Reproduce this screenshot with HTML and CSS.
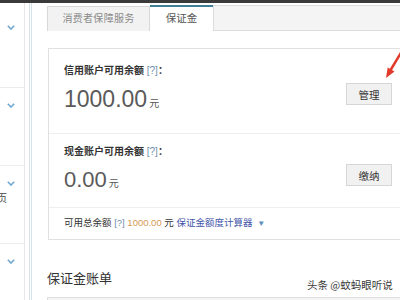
FILE: index.html
```html
<!DOCTYPE html>
<html lang="zh">
<head>
<meta charset="utf-8">
<link rel="stylesheet" href="styles.css">
</head>
<body>
<div class="topbar"></div>
<div class="layout">
  <aside class="sidebar">
    <div class="side-item first">
      <svg class="chev" viewBox="0 0 8 5" width="8" height="5"><polyline points="0.8,0.8 4,4 7.2,0.8"/></svg>
    </div>
    <div class="side-item">
      <svg class="chev" viewBox="0 0 8 5" width="8" height="5"><polyline points="0.8,0.8 4,4 7.2,0.8"/></svg>
    </div>
    <div class="side-item">
      <svg class="chev" viewBox="0 0 8 5" width="8" height="5"><polyline points="0.8,0.8 4,4 7.2,0.8"/></svg>
      <div class="side-text">页</div>
    </div>
    <div class="side-item">
      <svg class="chev" viewBox="0 0 8 5" width="8" height="5"><polyline points="0.8,0.8 4,4 7.2,0.8"/></svg>
    </div>
  </aside>
  <div class="rail"></div>
  <main class="main">
    <div class="tabs">
      <div class="tab">消费者保障服务</div>
      <div class="tab active">保证金</div>
      <div class="tab-rest"></div>
    </div>
    <div class="panel">
      <div class="section s1">
        <div class="info">
          <div class="label">信用账户可用余额 <span class="q">[?]</span>：</div>
          <div class="amount">1000.00<span class="unit">元</span></div>
        </div>
        <button class="btn">管理</button>
      </div>
      <div class="section s2">
        <div class="info">
          <div class="label">现金账户可用余额 <span class="q">[?]</span>：</div>
          <div class="amount">0.00<span class="unit">元</span></div>
        </div>
        <button class="btn">缴纳</button>
      </div>
      <div class="footer">
        可用总余额 <span class="q">[?]</span> <span class="total">1000.00</span> 元 <span class="link">保证金额度计算器</span> <span class="caret">▼</span>
      </div>
    </div>
    <h2 class="title">保证金账单</h2>
    <div class="table-head">
      <span class="col c1">项目</span>
      <span class="col c2">来源账户</span>
      <span class="col c3">去向账户</span>
      <span class="col c4">金额</span>
    </div>
  </main>
</div>
<svg class="arrow" viewBox="0 0 22 34" width="22" height="34">
  <line x1="22" y1="3" x2="10" y2="23" />
  <polygon points="6,30 14.5,23.4 7.7,19.4" />
</svg>
<div class="watermark">头条 @蚊蚂眼听说</div>
</body>
</html>
```
FILE: styles.css
```css
html, body {
  margin: 0;
  padding: 0;
  width: 400px;
  height: 300px;
  overflow: hidden;
  background: #fff;
  font-family: "Liberation Sans", "Noto Sans CJK SC", sans-serif;
  color: #333;
  position: relative;
}
.topbar {
  height: 3px;
  background: #3a3a3a;
}
.layout {
  display: flex;
  height: 297px;
}
.sidebar {
  width: 24px;
  flex: none;
  border-right: 1px solid #e6e6e6;
  overflow: hidden;
}
.side-item {
  height: 77px;
  border-bottom: 1px solid #ececec;
  padding-top: 15px;
  box-sizing: border-box;
  height: 78px;
}
.side-item.first {
  height: 85px;
  padding-top: 22px;
}
.chev {
  display: block;
  margin-left: 7px;
  fill: none;
  stroke: #6ea8d0;
  stroke-width: 1.6;
}
.side-text {
  font-size: 10px;
  line-height: 12px;
  margin-top: 7px;
  margin-left: -3px;
  color: #444;
}
.rail {
  width: 4px;
  flex: none;
  border-right: 3px double #d6e2e9;
}
.main {
  flex: none;
  width: 368px;
}
.tabs {
  display: flex;
  margin-top: 2px;
  margin-left: 15px;
  height: 26px;
  align-items: flex-end;
}
.tab {
  font-size: 10px;
  height: 26px;
  line-height: 24px;
  box-sizing: border-box;
  text-align: center;
}
.tab:first-child {
  width: 103px;
  height: 25px;
  background: #f2f2f2;
  border: 1px solid #d8d8d8;
  border-bottom: none;
  color: #8a8a8a;
  letter-spacing: 0.3px;
}
.tab.active {
  width: 63px;
  background: #fff;
  border-top: 2px solid #3f7f95;
  color: #555;
  font-size: 10.5px;
  line-height: 23px;
}
.tab-rest {
  flex: 1;
  height: 26px;
  box-sizing: border-box;
  background: #f4f4f4;
  border: 1px solid #dcdcdc;
  border-right: none;
}
.panel {
  margin-top: 17px;
  margin-left: 16px;
  margin-right: -12px;
  border: 1px solid #e0e0e0;
}
.section {
  display: flex;
  justify-content: space-between;
  align-items: flex-start;
  padding-left: 15px;
  padding-right: 19px;
  border-bottom: 1px solid #eeeeee;
}
.s1 {
  padding-top: 15px;
  padding-bottom: 15px;
}
.s2 {
  padding-top: 11px;
  padding-bottom: 9px;
}
.label {
  font-size: 10px;
  line-height: 14px;
  font-weight: bold;
  color: #333;
}
.q {
  color: #6f8fb0;
  font-weight: normal;
}
.amount {
  margin-top: 7px;
  font-size: 23px;
  line-height: 28px;
  color: #5a5a5a;
}
.s2 .amount {
  font-size: 22px;
}
.unit {
  font-size: 10px;
  margin-left: 2px;
  color: #555;
}
.btn {
  margin-top: 19px;
  width: 46px;
  height: 22px;
  padding: 0;
  background: #f1f1f1;
  border: 1px solid #d6d6d6;
  border-radius: 0;
  font-family: "Noto Sans CJK SC", sans-serif;
  font-size: 10.5px;
  color: #333;
}
.footer {
  padding: 8px 15px;
  font-size: 9.5px;
  line-height: 14px;
  color: #333;
}
.total {
  color: #d59a52;
}
.link {
  color: #3f55a8;
}
.caret {
  color: #5b8fc0;
  font-size: 8px;
  margin-left: 2px;
}
.title {
  margin: 30px 0 0 15px;
  font-size: 13px;
  line-height: 18px;
  font-weight: normal;
  color: #333;
}
.table-head {
  margin-top: 9px;
  margin-left: 15px;
  margin-right: -12px;
  height: 26px;
  background: #f5f5f5;
  border: 1px solid #dedede;
  display: flex;
  font-size: 10px;
  line-height: 14px;
  padding-top: 7px;
  color: #555;
  box-sizing: border-box;
}
.col.c1 { margin-left: 18px; width: 75px; }
.col.c2 { width: 103px; }
.col.c3 { width: 107px; }
.arrow {
  position: absolute;
  left: 380px;
  top: 48px;
}
.arrow line {
  stroke: #e23a2a;
  stroke-width: 2.5;
}
.arrow polygon {
  fill: #e23a2a;
}
.watermark {
  position: absolute;
  left: 307px;
  top: 278px;
  font-family: "Noto Sans CJK SC", sans-serif;
  font-size: 10.5px;
  line-height: 14px;
  color: #3a3a3a;
  text-shadow: 0 0 2px #fff, 0 0 2px #fff, 0 0 2px #fff;
}
```
